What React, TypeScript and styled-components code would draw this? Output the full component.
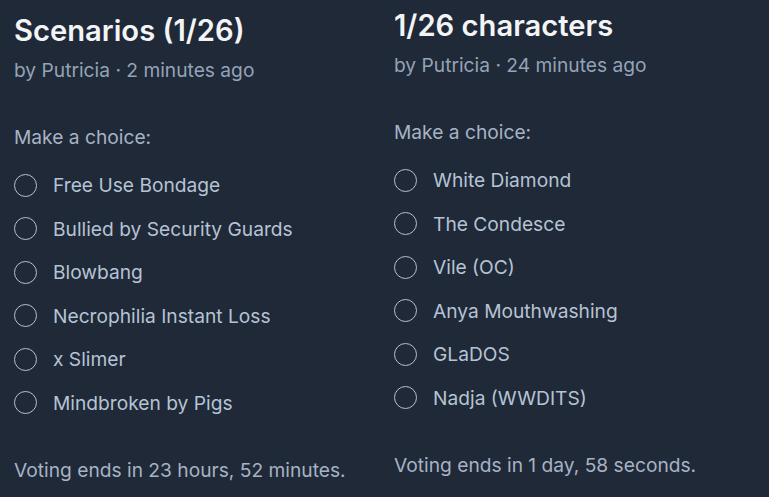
import styled, { createGlobalStyle } from "styled-components";

const GlobalStyle = createGlobalStyle`
  html, body {
    margin: 0;
    padding: 0;
    background: #1f2937;
  }
  body {
    font-family: Inter, "Noto Sans", sans-serif;
  }
`;

const Page = styled.div`
  display: grid;
  grid-template-columns: 380px 1fr;
  padding-left: 14px;
  width: 769px;
  height: 497px;
  box-sizing: border-box;
  background: #1f2937;
  overflow: hidden;
`;

const Poll = styled.div<{ $top: number }>`
  display: flex;
  flex-direction: column;
  padding-top: ${props => props.$top}px;
`;

const Title = styled.div`
  font-size: 29.2px;
  font-weight: 600;
  line-height: 34px;
  color: #f3f4f6;
`;

const Byline = styled.div`
  margin-top: 8px;
  font-size: 19.2px;
  line-height: 28px;
  color: #94a3b8;
`;

const Prompt = styled.div`
  margin-top: 39px;
  font-size: 19.2px;
  line-height: 28px;
  color: #a7b3c5;
`;

const Options = styled.div`
  display: flex;
  flex-direction: column;
  gap: 15.6px;
  margin-top: 20px;
`;

const Option = styled.label`
  display: flex;
  align-items: center;
  gap: 16px;
  font-size: 19.2px;
  line-height: 28px;
  color: #b6c3d5;
  cursor: pointer;
`;

const Radio = styled.span`
  width: 23px;
  height: 23px;
  box-sizing: border-box;
  border: 1.5px solid #b9c0ca;
  border-radius: 50%;
  flex-shrink: 0;
`;

const Footer = styled.div`
  margin-top: 39px;
  font-size: 19.2px;
  line-height: 28px;
  color: #a7b3c5;
`;

type PollData = {
  title: string;
  byline: string;
  options: string[];
  ends: string;
  top: number;
};

const polls: PollData[] = [
  {
    title: "Scenarios (1/26)",
    byline: "by Putricia · 2 minutes ago",
    options: [
      "Free Use Bondage",
      "Bullied by Security Guards",
      "Blowbang",
      "Necrophilia Instant Loss",
      "x Slimer",
      "Mindbroken by Pigs",
    ],
    ends: "Voting ends in 23 hours, 52 minutes.",
    top: 14,
  },
  {
    title: "1/26 characters",
    byline: "by Putricia · 24 minutes ago",
    options: [
      "White Diamond",
      "The Condesce",
      "Vile (OC)",
      "Anya Mouthwashing",
      "GLaDOS",
      "Nadja (WWDITS)",
    ],
    ends: "Voting ends in 1 day, 58 seconds.",
    top: 9,
  },
];

const App = () => {
  return (
    <>
      <GlobalStyle />
      <Page>
        {polls.map(poll => (
          <Poll key={poll.title} $top={poll.top}>
            <Title>{poll.title}</Title>
            <Byline>{poll.byline}</Byline>
            <Prompt>Make a choice:</Prompt>
            <Options>
              {poll.options.map(option => (
                <Option key={option}>
                  <Radio />
                  {option}
                </Option>
              ))}
            </Options>
            <Footer>{poll.ends}</Footer>
          </Poll>
        ))}
      </Page>
    </>
  );
};

export default App;
